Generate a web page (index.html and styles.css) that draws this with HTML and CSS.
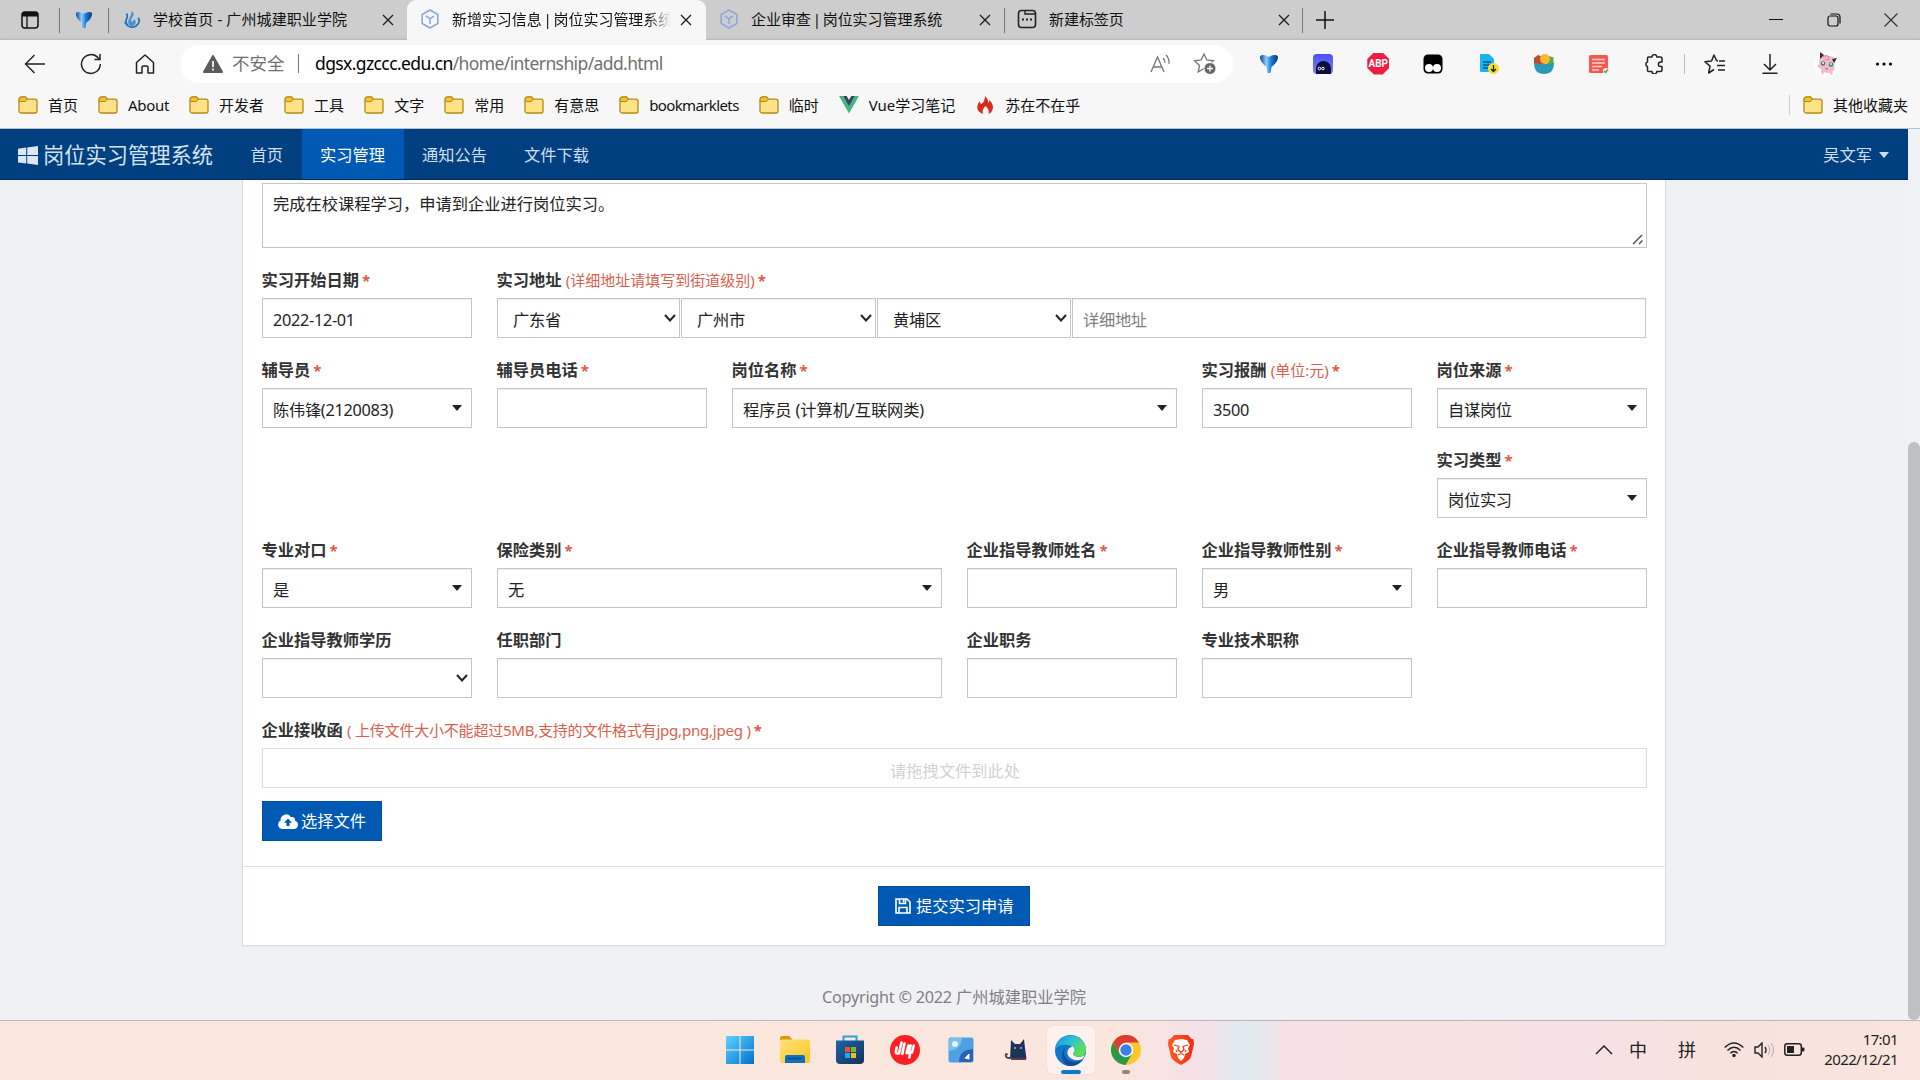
FILE: index.html
```html
<!DOCTYPE html>
<html lang="zh-CN">
<head>
<meta charset="utf-8">
<title>新增实习信息 | 岗位实习管理系统</title>
<link rel="stylesheet" href="styles.css">
</head>
<body>
<svg class="defs" width="0" height="0">
  <defs>
    <linearGradient id="gBlue" x1="0" x2="1"><stop offset="0" stop-color="#0d3c8c"/><stop offset=".35" stop-color="#8fd0ff"/><stop offset=".6" stop-color="#1b7fe0"/><stop offset="1" stop-color="#06386f"/></linearGradient>
    <linearGradient id="gWin" x1="0" y1="0" x2="1" y2="1"><stop offset="0" stop-color="#5fd3ff"/><stop offset="1" stop-color="#0070d0"/></linearGradient>
    <linearGradient id="gFold" x1="0" y1="0" x2="1" y2="1"><stop offset="0" stop-color="#ffe27a"/><stop offset="1" stop-color="#ffc41f"/></linearGradient>
    <linearGradient id="gStore" x1="0" y1="0" x2="1" y2="1"><stop offset="0" stop-color="#1a66a8"/><stop offset="1" stop-color="#14305c"/></linearGradient>
    <linearGradient id="gEdge" x1="0" y1="0" x2="1" y2=".5"><stop offset="0" stop-color="#1d8fe0"/><stop offset=".5" stop-color="#2cc0d8"/><stop offset="1" stop-color="#5fe04c"/></linearGradient>
    <linearGradient id="gBrave" x1="0" x2="1"><stop offset="0" stop-color="#ff5a1f"/><stop offset="1" stop-color="#f52a10"/></linearGradient>
    <linearGradient id="gPurp" x1="0" y1="0" x2="0" y2="1"><stop offset="0" stop-color="#4a4ff5"/><stop offset="1" stop-color="#7c84f0"/></linearGradient>
    <symbol id="folder" viewBox="0 0 20 18"><path d="M1 4a3 3 0 0 1 3-3h3.500l2 2.200H17a2 2 0 0 1 2 2V15a2 2 0 0 1-2 2H3a2 2 0 0 1-2-2z" fill="#ffe187" stroke="#b58a14" stroke-width="1.300"/><path d="M1.200 5.500V3.600A2.600 2.600 0 0 1 3.800 1H7.300l2 2.200-1.800 2.300z" fill="#f2c230" stroke="#b58a14"/></symbol>
    <symbol id="close" viewBox="0 0 12 12"><path d="M1 1l10 10M11 1L1 11" stroke="#222" stroke-width="1.400"/></symbol>
    <symbol id="vee" viewBox="0 0 18 20"><path d="M0 3.500Q0 .8 3 1q3.500 0 6 2 2.500-2 6-2 3-.2 3 2.500-.5 5-6.500 9.500L10.500 19h-3L6.500 13Q.5 8.500 0 3.500z" fill="url(#gBlue)"/></symbol>
    <symbol id="cube" viewBox="0 0 20 20"><path d="M10 1l7.800 4.500v9L10 19l-7.800-4.500v-9z" fill="none" stroke="#8ba8dc" stroke-width="1.600"/><path d="M6 7l4 2.800L14 7M10 9.800V15" fill="none" stroke="#8ba8dc" stroke-width="1.600"/></symbol>
  </defs>
</svg>

<div class="tabstrip">
  <div class="tab-tool"><svg width="18" height="18" viewBox="0 0 18 18"><rect x="1" y="1" width="16" height="16" rx="3" fill="none" stroke="#111" stroke-width="1.500"/><path d="M1 5.500V3.500A2.500 2.500 0 0 1 3.500 1h11A2.500 2.500 0 0 1 17 3.500V5.500z" fill="#111"/><path d="M6 5v12" stroke="#111" stroke-width="1.300"/></svg></div>
  <div class="tab-pin"><svg width="18" height="18"><use href="#vee"/></svg></div>
  <div class="tab">
    <svg class="favicon" width="20" height="20" viewBox="0 0 20 20"><path d="M10 2q3 3 .5 6-2.500 3-.5 5 2-1 1.500-3 3 1.500 2 4.500-1.500 3-4.500 2.500Q5 15.500 6.500 11 9 7 10 2z" fill="#4a90cf"/><path d="M4.500 4.500Q6 7 4.500 10 3 14 6 16.500M16 9q2.500 2.500 0 6-3 4-7.500 3-4-1-5.500-5" fill="none" stroke="#2474bd" stroke-width="1.800"/></svg>
    <span class="tab-title first">学校首页 - 广州城建职业学院</span><svg class="x" width="12" height="12"><use href="#close"/></svg>
  </div>
  <div class="tab active">
    <svg class="favicon" width="20" height="20"><use href="#cube"/></svg>
    <span class="tab-title piped fade">新增实习信息 | 岗位实习管理系统</span><svg class="x" width="12" height="12"><use href="#close"/></svg>
  </div>
  <div class="tab">
    <svg class="favicon" width="20" height="20"><use href="#cube"/></svg>
    <span class="tab-title piped">企业审查 | 岗位实习管理系统</span><svg class="x" width="12" height="12"><use href="#close"/></svg>
  </div>
  <div class="tab divided">
    <svg class="favicon" width="20" height="20" viewBox="0 0 20 20"><rect x="1.500" y="1.500" width="17" height="17" rx="3" fill="none" stroke="#222" stroke-width="1.600"/><path d="M8 2v3h10" fill="none" stroke="#222" stroke-width="1.400"/><path d="M5 10.500h2M9 10.500h2M13 10.500h2" stroke="#222" stroke-width="2"/></svg>
    <span class="tab-title">新建标签页</span><svg class="x" width="12" height="12"><use href="#close"/></svg>
  </div>
  <div class="new-tab"><svg width="18" height="18" viewBox="0 0 18 18"><path d="M9 0v18M0 9h18" stroke="#111" stroke-width="1.500"/></svg></div>
  <div class="win-btns">
    <svg width="14" height="14" viewBox="0 0 14 14"><path d="M0 6.500h14" stroke="#111"/></svg>
    <svg width="14" height="14" viewBox="0 0 14 14" fill="none" stroke="#111" stroke-width="1.200"><rect x="1" y="3" width="10" height="10" rx="2"/><path d="M3.500 1H10a3 3 0 0 1 3 3v6.500"/></svg>
    <svg width="14" height="14" viewBox="0 0 14 14"><path d="M.5 .5l13 13M13.500 .5l-13 13" stroke="#333" stroke-width="1.200"/></svg>
  </div>
</div>

<div class="toolbar">
  <div class="nav-icons">
    <svg width="22" height="20" viewBox="0 0 22 20" fill="none" stroke="#222" stroke-width="1.400"><path d="M21 10H2M10.500 1L1.500 10l9 9"/></svg>
    <svg width="22" height="22" viewBox="0 0 22 22" fill="none" stroke="#222" stroke-width="1.500"><path d="M20.300 11A9.400 9.400 0 1 1 17.800 4.600l1.700 1.700M20 1v5.500h-5.500"/></svg>
    <svg width="20" height="20" viewBox="0 0 20 20" fill="none" stroke="#222" stroke-width="1.500" stroke-linejoin="round"><path d="M1.500 8.500L10 1l8.500 7.500V19H13v-5.500q0-1.500-1.500-1.500h-3Q7 12 7 13.500V19H1.500z"/></svg>
  </div>
  <div class="address">
    <svg width="20" height="18" viewBox="0 0 20 18"><path d="M10 1L19 17H1z" fill="#5c5c5c" stroke="#5c5c5c" stroke-width="2" stroke-linejoin="round"/><path d="M10 6v6M10 13.500v2" stroke="#fff" stroke-width="1.700"/></svg>
    <span class="insecure">不安全</span><i class="bar"></i>
    <span class="url"><b>dgsx.gzccc.edu.cn</b>/home/internship/add.html</span>
    <svg class="read" width="22" height="20" viewBox="0 0 22 20" fill="none" stroke="#777" stroke-width="1.300"><path d="M1 18L7.500 3 14 18M3.500 13h8M13 4q2 2 2 5M16 1q3.500 3.500 3 9"/></svg>
    <svg class="fav" width="24" height="22" viewBox="0 0 24 22"><path d="M11 1l2.800 6 6.700.8-5 4.600 1.300 6.500L11 15.500 5.200 19l1.300-6.600-5-4.600L8.200 7z" fill="none" stroke="#777" stroke-width="1.300"/><circle cx="17" cy="15.500" r="6" fill="#666" stroke="#fff"/><path d="M17 12.500v6M14 15.500h6" stroke="#fff" stroke-width="1.300"/></svg>
  </div>
  <div class="exts">
    <svg width="18" height="20"><use href="#vee"/></svg>
    <svg width="20" height="20" viewBox="0 0 20 20"><rect width="20" height="20" rx="4" fill="url(#gPurp)"/><path d="M3 20v-5a7.500 7.500 0 0 1 15-1v6z" fill="#0b0d3c"/><circle cx="6.500" cy="14.500" r="1.300" fill="none" stroke="#fff"/><circle cx="10" cy="14.500" r="1.300" fill="none" stroke="#fff"/></svg>
    <span class="abp">ABP</span>
    <svg width="20" height="20" viewBox="0 0 20 20"><rect x=".5" y=".5" width="19" height="19" rx="4.500" fill="#000"/><circle cx="6" cy="14" r="4" fill="#fff"/><circle cx="14" cy="14" r="4" fill="#fff"/></svg>
    <svg width="20" height="20" viewBox="0 0 20 20"><path d="M1 1q0-1 1-1h8l5 5v13H2q-1 0-1-1z" fill="#18b4ea"/><path d="M4 8h8M4 11h8M4 14h5" stroke="#075a8c" stroke-width="1.300"/><circle cx="14.500" cy="14.500" r="5.500" fill="#f8e02c"/><path d="M14.500 11v6.500M12 15l2.500 2.500L17 15" fill="none" stroke="#222" stroke-width="1.400"/></svg>
    <svg width="20" height="20" viewBox="0 0 20 20"><path d="M0 10V4l4-3 5 2 3 7z" fill="#c8443d"/><path d="M19.500 10V3.500L15 2l-2 8z" fill="#59a84b"/><circle cx="11" cy="5" r="5" fill="#f7b82c"/><path d="M0 8.500q3 1.500 10 1.500t10-1.500Q20 20 10 20T0 8.500z" fill="#2c9ab7"/></svg>
    <svg width="20" height="20" viewBox="0 0 20 20"><rect x="0" y="1" width="19" height="18" rx="1.500" fill="#fb5550"/><path d="M3 5.500h13M3 9h13M3 12.500h10M3 16h7" stroke="#fff" stroke-opacity=".75" stroke-width="1.300"/><circle cx="17" cy="17" r="3" fill="#eef7ea"/><path d="M15 17l1.500 1.500L19 15.500" stroke="#43b14b" fill="none" stroke-width="1.500"/></svg>
    <svg width="20" height="20" viewBox="0 0 20 20" fill="none" stroke="#222" stroke-width="1.500" stroke-linejoin="round"><path d="M4.500 3H8a2.400 2.400 0 0 1 4.800 0h3.700q1.500 0 1.500 1.500V8h-1.300a2.300 2.300 0 0 0 0 4.600H18v3.400q0 1.500-1.500 1.500h-3.700a2.400 2.400 0 0 1-4.800 0H4.500q-1 0-1-1v-3.900a2.400 2.400 0 0 1 0-4.600V4q0-1 1-1z"/></svg>
    <i class="tsep"></i>
    <svg width="22" height="20" viewBox="0 0 22 20" fill="none" stroke="#222" stroke-width="1.500" stroke-linejoin="round"><path d="M14 7l-1.500-.5L10 1 7.500 7 1 7.800l5 4.300L4.700 19 10 15.500M15 7h6M13 11.500h8M14 16h7"/></svg>
    <svg width="18" height="20" viewBox="0 0 18 20" fill="none" stroke="#222" stroke-width="1.500"><path d="M9 0v16M3 10l6 6 6-6M1.500 19.200h15"/></svg>
    <svg width="26" height="26" viewBox="0 0 26 26"><circle cx="13" cy="13" r="13" fill="#fff"/><path d="M5.500 9L6.500 2l5 3h5l5 2-1 7q1 8-7 8Q4 21 5.500 9z" fill="#f4bccb"/><path d="M4 14l3 3M8 20l1 3M17 21l1 2.500" stroke="#f4bccb" stroke-width="2.500"/><path d="M6 1l4 3-4 4zM23 7l-3 5-2-4z" fill="#3c2934"/><circle cx="9" cy="12.500" r="2.300" fill="#2d8b84"/><circle cx="17" cy="13.500" r="2.300" fill="#2d8b84"/><circle cx="9" cy="12" r="1" fill="#fff"/><circle cx="17" cy="13" r="1" fill="#fff"/><path d="M9 6q5-3 6 1-1 3-4 1" fill="none" stroke="#df8fa7" stroke-width="1.200"/><path d="M11.500 17.500q1.500 1.500 2.500 0" stroke="#a14d5e" fill="none"/></svg>
    <svg width="18" height="4" viewBox="0 0 18 4"><circle cx="2.500" cy="2" r="1.600"/><circle cx="9" cy="2" r="1.600"/><circle cx="15.500" cy="2" r="1.600"/></svg>
  </div>
</div>

<div class="bookmarks">
  <span class="bm"><svg width="20" height="18"><use href="#folder"/></svg>首页</span>
  <span class="bm about"><svg width="20" height="18"><use href="#folder"/></svg>About</span>
  <span class="bm"><svg width="20" height="18"><use href="#folder"/></svg>开发者</span>
  <span class="bm"><svg width="20" height="18"><use href="#folder"/></svg>工具</span>
  <span class="bm"><svg width="20" height="18"><use href="#folder"/></svg>文字</span>
  <span class="bm"><svg width="20" height="18"><use href="#folder"/></svg>常用</span>
  <span class="bm"><svg width="20" height="18"><use href="#folder"/></svg>有意思</span>
  <span class="bm marklets"><svg width="20" height="18"><use href="#folder"/></svg>bookmarklets</span>
  <span class="bm"><svg width="20" height="18"><use href="#folder"/></svg>临时</span>
  <span class="bm"><svg width="20" height="18" viewBox="0 0 20 18"><path d="M0 0h4l6 10.500L16 0h4L10 17.500z" fill="#41b883"/><path d="M4 0h3.700L10 4l2.300-4H16l-6 10.500z" fill="#35495e"/></svg>Vue学习笔记</span>
  <span class="bm"><svg width="20" height="18" viewBox="0 0 20 18"><path d="M10 0q4 4 3 7 1 0 1.500-3Q20 10 17 15q-1 2-3.500 3 1.500-4-3-8-4 4-2.500 8Q0 15 3 8l2-3q0 3 1.500 3Q10 5 10 0z" fill="#dc2a18"/></svg>苏在不在乎</span>
  <span class="bm other"><svg width="20" height="18"><use href="#folder"/></svg>其他收藏夹</span>
</div>

<div class="viewport">
  <div class="page">
    <nav class="navbar">
      <div class="brand"><svg width="20" height="19" viewBox="0 0 20 19"><path d="M0 2.700l8.200-1.200v7.600H0zM9.200 1.400L20 0v9.100H9.200zM0 10h8.200v7.600L0 16.400zM9.200 10H20v9L9.200 17.600z" fill="#dce7f2"/></svg>岗位实习管理系统</div>
      <a class="link">首页</a><a class="link on">实习管理</a><a class="link">通知公告</a><a class="link">文件下载</a>
      <div class="user">吴文军<i class="caret"></i></div>
    </nav>
    <main class="card">
      <div class="card-body">
        <div class="textarea">完成在校课程学习，申请到企业进行岗位实习。<svg class="grip" width="12" height="11" viewBox="0 0 12 11"><path d="M1 10L10 1M7 10l3.500-3.500" stroke="#444" stroke-width="1.300"/></svg></div>
        <div class="form">
          <div class="field"><label>实习开始日期<em>*</em></label><div class="ctl">2022-12-01</div></div>
          <div class="field s5"><label>实习地址 <small>(详细地址请填写到街道级别)</small><em>*</em></label>
            <div class="addr"><div class="ctl native">广东省<svg class="chev" width="12" height="8" viewBox="0 0 12 8"><path d="M1 1l5 5.500L11 1"/></svg></div><div class="ctl native">广州市<svg class="chev" width="12" height="8" viewBox="0 0 12 8"><path d="M1 1l5 5.500L11 1"/></svg></div><div class="ctl native">黄埔区<svg class="chev" width="12" height="8" viewBox="0 0 12 8"><path d="M1 1l5 5.500L11 1"/></svg></div><div class="ctl ph">详细地址</div></div></div>

          <div class="field"><label>辅导员<em>*</em></label><div class="ctl">陈伟锋(2120083)<i class="caret"></i></div></div>
          <div class="field"><label>辅导员电话<em>*</em></label><div class="ctl"></div></div>
          <div class="field s2"><label>岗位名称<em>*</em></label><div class="ctl job">程序员 (计算机/互联网类)<i class="caret"></i></div></div>
          <div class="field"><label>实习报酬 <small>(单位:元)</small><em>*</em></label><div class="ctl">3500</div></div>
          <div class="field"><label>岗位来源<em>*</em></label><div class="ctl">自谋岗位<i class="caret"></i></div></div>

          <div class="field last"><label>实习类型<em>*</em></label><div class="ctl">岗位实习<i class="caret"></i></div></div>

          <div class="field"><label>专业对口<em>*</em></label><div class="ctl">是<i class="caret"></i></div></div>
          <div class="field s2"><label>保险类别<em>*</em></label><div class="ctl">无<i class="caret"></i></div></div>
          <div class="field"><label>企业指导教师姓名<em>*</em></label><div class="ctl"></div></div>
          <div class="field"><label>企业指导教师性别<em>*</em></label><div class="ctl">男<i class="caret"></i></div></div>
          <div class="field"><label>企业指导教师电话<em>*</em></label><div class="ctl"></div></div>

          <div class="field"><label>企业指导教师学历</label><div class="ctl native"><svg class="chev" width="12" height="8" viewBox="0 0 12 8"><path d="M1 1l5 5.500L11 1"/></svg></div></div>
          <div class="field s2"><label>任职部门</label><div class="ctl"></div></div>
          <div class="field"><label>企业职务</label><div class="ctl"></div></div>
          <div class="field"><label>专业技术职称</label><div class="ctl"></div></div>

          <div class="field s6"><label>企业接收函 <small class="upload-hint">( 上传文件大小不能超过5MB,支持的文件格式有jpg,png,jpeg )</small><em>*</em></label><div class="ctl drop">请拖拽文件到此处</div></div>
        </div>
        <button class="btn pick"><svg width="20" height="15" viewBox="0 0 20 15"><path d="M4.500 15A4.500 4.500 0 0 1 2.600 6.500 5.600 5.600 0 0 1 13 3.200a3 3 0 0 1 4 3.600A4.200 4.200 0 0 1 16 15z" fill="#fff"/><path d="M10 4.500l4 4.200h-2.500V12h-3V8.700H6z" fill="#0059b3"/></svg>选择文件</button>
      </div>
      <div class="card-foot"><button class="btn submit"><svg width="16" height="16" viewBox="0 0 16 16" fill="none" stroke="#fff" stroke-width="1.600"><path d="M1 1h11l3 3v11H1zM4 15V9.500h8V15M4.500 1v4.500h6V1"/><path d="M8.500 1.500v3"/></svg>提交实习申请</button></div>
    </main>
    <footer class="copy"><span>Copyright © 2022</span> 广州城建职业学院</footer>
  </div>
  <div class="scroll"><div class="thumb"></div></div>
</div>

<div class="taskbar">
  <div class="apps">
    <div class="app"><svg width="30" height="30" viewBox="0 0 30 30"><path d="M1 1h13.500v13.500H1zM15.500 1H29v13.500H15.500zM1 15.500h13.500V29H1zM15.500 15.500H29V29H15.500z" fill="url(#gWin)"/></svg></div>
    <div class="app"><svg width="30" height="28" viewBox="0 0 30 28"><path d="M0 2q0-2 2-2h7l4 4v5H0z" fill="#d79b08"/><path d="M0 5q0-1.500 2-1.500h26q2 0 2 2V25q0 2-2 2H2q-2 0-2-2z" fill="url(#gFold)"/><path d="M5 27v-6q0-2 2-2h16q2 0 2 2v6z" fill="#0d6fc0"/><path d="M8 22.500h14" stroke="#0a4c8c" stroke-width="1.500"/></svg></div>
    <div class="app"><svg width="30" height="30" viewBox="0 0 30 30"><path d="M8.500 7V1.500h13V7" fill="none" stroke="#25a5e8" stroke-width="2"/><path d="M1 5.500h28V25q0 4-4 4H5q-4 0-4-4z" fill="url(#gStore)"/><path d="M10 12h5v5h-5z" fill="#f1502f"/><path d="M16 12h5v5h-5z" fill="#7fba1e"/><path d="M10 18h5v5h-5z" fill="#20a8ef"/><path d="M16 18h5v5h-5z" fill="#fdb913"/></svg></div>
    <div class="app"><svg width="30" height="30" viewBox="0 0 30 30"><circle cx="15" cy="15" r="15" fill="#fb1f24"/><g fill="none" stroke="#fff" stroke-width="2.600" stroke-linecap="round" stroke-linejoin="round"><path d="M11.500 7.500L9 18.500H7q-1.500 0-1-2.500l.7-3.500M14.500 8.500L12.300 19M18.500 10.500L16.500 18h2.200l2-7.500M23.800 10.500L22 17.500h-1.500M20.300 18l-1 4.500"/></g></svg></div>
    <div class="app"><svg width="26" height="26" viewBox="0 0 26 26"><rect x=".5" y=".5" width="25" height="25" rx="2.500" fill="#4ea0e2"/><path d="M1 14q12-1 13-13H3Q1 1 1 3z" fill="#79c0f0"/><circle cx="7" cy="7" r="3" fill="#e6f6ff"/><path d="M11 25q0-12 14-13v11q0 2-2 2z" fill="#2764b8"/><path d="M17 21l4-4v5z" fill="#fff" stroke="#fff"/></svg></div>
    <div class="app"><svg width="24" height="24" viewBox="0 0 24 24"><path d="M7 2l4 4h5l4-5 1 9 1.500 11H6z" fill="#1f3358"/><path d="M8 20H4q-3-1-2-4l2 .5M7 21h15" fill="none" stroke="#54405a" stroke-width="1.800"/><circle cx="11" cy="10" r="1" fill="#9cb6e4"/><circle cx="17" cy="10" r="1" fill="#9cb6e4"/></svg></div>
    <div class="app current"><svg width="31" height="31" viewBox="0 0 30 30"><circle cx="15" cy="15" r="15" fill="#1276cc"/><path d="M.3 13A15 15 0 0 1 30 14q0 6-6 7-7 .5-6-3 2-8-7-8.500Q4 9 .3 13z" fill="url(#gEdge)"/><path d="M10 12q-4 9 4 13 7 3 13-1.500A15 15 0 0 1 12 29.700Q6 26 7 18q.5-4 3-6z" fill="#124c91"/><path d="M17 11q3 3 .8 6.500-1 2.500 3 3.500 5 1 8-2-1 4-4 5-8 1.500-12-4-3-6 4.200-9z" fill="#fdf1ee"/></svg></div>
    <div class="app open"><svg width="30" height="30" viewBox="0 0 30 30"><circle cx="15" cy="15" r="15" fill="#fcc72c"/><path d="M2 7.500A15 15 0 0 1 28 7.500H15l-6.500 11z" fill="#dc3d31"/><path d="M2 7.500A15 15 0 0 0 14.500 30l6.500-11-12.500-.5z" fill="#289949"/><circle cx="15" cy="15" r="7.200" fill="#fff"/><circle cx="15" cy="15" r="5.700" fill="#3b7de9"/></svg></div>
    <div class="app"><svg width="26" height="30" viewBox="0 0 26 30"><path d="M6 0h14l3 3.500 2.500 1L26 9l-3 13q-2 4-10 8Q5 26 3 22L0 9l.5-4.500L3 3.500z" fill="url(#gBrave)"/><path d="M7 5l6-1 6 1 3 5-2 3 1 4-4 2-1 4-3 3-3-3-1-4-4-2 1-4-2-3z" fill="#fff"/><path d="M6 10l5 1.500-1 3 3 3 3-3-1-3 5-1.500M10 20l3-1.500 3 1.500M8 15l1 2M18 15l-1 2" fill="none" stroke="#f4431c" stroke-width="1.300"/></svg></div>
  </div>
  <div class="tray">
    <svg class="up" width="18" height="10" viewBox="0 0 18 10"><path d="M1 9l8-8 8 8" fill="none" stroke="#222" stroke-width="1.500"/></svg>
    <span class="ime">中</span><span class="ime pin">拼</span>
    <svg class="wifi" width="20" height="16" viewBox="0 0 20 16" fill="none" stroke="#222" stroke-width="1.500"><path d="M.7 5.500Q10-3.500 19.300 5.500M3.500 8.500Q10 2 16.500 8.500M6.300 11.300Q10 7.500 13.700 11.300"/><circle cx="10" cy="13.500" r="1" fill="#222"/></svg>
    <svg class="vol" width="21" height="16" viewBox="0 0 21 16" fill="none" stroke="#222" stroke-width="1.400"><path d="M1 5h3l4-4v14l-4-4H1zM11 5q2 3 0 6"/><path d="M14 3q3.500 5 0 10M17 1q5 7 0 14" stroke="#b5a8a8" stroke-width="1"/></svg>
    <svg class="bat" width="21" height="13" viewBox="0 0 21 13"><rect x=".8" y=".8" width="16.500" height="11.400" rx="2.500" fill="none" stroke="#222" stroke-width="1.500"/><rect x="3" y="3" width="7" height="7" fill="#222"/><path d="M18 4.500h1.500q1 0 1 2t-1 2H18z" fill="#222"/></svg>
    <div class="clock"><span>17:01</span><span>2022/12/21</span></div>
  </div>
</div>
</body>
</html>
```
FILE: styles.css
```css
* { box-sizing: border-box; }
body {
  margin: 0; width: 1920px; height: 1080px; overflow: hidden;
  display: flex; flex-direction: column;
  font: 15px/20px "Noto Sans", "Noto Sans CJK SC", sans-serif; color: #111; background: #f7f7f7;
}
svg { display: block; flex: none; }
i, em { font-style: normal; }
.defs { position: absolute; }

/* tab strip */
.tabstrip { height: 40px; display: flex; background: #cdcdcd; box-shadow: inset 0 -2px 2px -1px #b4b4b4; flex: none; }
.tab-tool { width: 59px; padding: 11px 0 0 21px; }
.tab-pin { width: 50px; padding: 11px 0 0 16px; background: linear-gradient(#777, #777) 0 8px / 1px 25px no-repeat, linear-gradient(#777, #777) 49px 8px / 1px 25px no-repeat; }
.tab { width: 298px; display: flex; align-items: center; padding: 0 12px 2px 13px; }
.tab.active { width: 299px; background: #f7f7f7; border-radius: 9px 9px 0 0; }
.tab.divided { background: linear-gradient(#777, #777) 0 8px / 1px 25px no-repeat, linear-gradient(#777, #777) 298px 8px / 1px 25px no-repeat; width: 299px; }
.favicon { margin-right: 12px; }
.tab-title { flex: 1; white-space: nowrap; overflow: hidden; padding-bottom: 1px; letter-spacing: -.05px; }
.tab-title.first { letter-spacing: .1px; margin-left: -1px; }
.tab-title.piped { word-spacing: -2px; }
.tab-title.fade { flex: 0 0 219px; margin-right: 9px; -webkit-mask-image: linear-gradient(90deg, #000 195px, transparent 219px); mask-image: linear-gradient(90deg, #000 195px, transparent 219px); }
.x { margin: 2px 1px 0 0; }
.new-tab { padding: 11px 0 0 13px; }
.win-btns { margin: 13px 22px 0 auto; display: flex; gap: 43.5px; }

/* toolbar */
.toolbar { height: 48px; flex: none; display: flex; align-items: center; padding-bottom: 1px; }
.nav-icons { width: 180px; padding-left: 24px; display: flex; align-items: center; gap: 33.5px; }
.address { width: 1053px; height: 38px; border-radius: 19px; background: #fff; display: flex; align-items: center; padding-left: 23px; font-size: 17.500px; color: #707070; }
.address span { padding-bottom: 1px; }
.insecure { margin-left: 9px; width: 55px; }
.bar { width: 1px; height: 19px; background: #777; margin: 0 16px 0 11px; }
.url { flex: 1; white-space: nowrap; letter-spacing: -.61px; }
.url b { font-weight: 400; color: #000; }
.read { margin-right: 21px; }
.fav { margin-right: 16px; }
.exts { flex: 1; display: flex; align-items: center; padding-left: 27px; gap: 35.150px; }
.abp { width: 22px; margin: 0 -1px; height: 22px; background: #ee1d42; color: #fff; font: 700 10px/22px Roboto, sans-serif; text-align: center; clip-path: polygon(30% 0, 70% 0, 100% 30%, 100% 70%, 70% 100%, 30% 100%, 0 70%, 0 30%); }
.tsep { width: 1px; height: 20px; background: #bbb; margin: 0 -16.500px 0 -15px; }

/* bookmarks */
.bookmarks { height: 41px; flex: none; display: flex; align-items: center; gap: 20px; padding: 0 12px 6px 18px; border-bottom: 1px solid #b4c0cc; }
.bm { display: flex; align-items: center; gap: 10px; white-space: nowrap; }
.bm.about { letter-spacing: -.3px; }
.bm.marklets { letter-spacing: -.62px; }
.bm.other { margin-left: auto; padding-left: 13px; border-left: 1px solid #ccc; }

/* page */
.viewport { flex: 1; display: flex; min-height: 0; }
.page { width: 1908px; background: #f0f1f5; font-size: 16.250px; line-height: 22px; }
.navbar { height: 51px; background: #004080; border-bottom: 1px solid #002b57; display: flex; align-items: center; color: #cfdeee; padding: 0 18px; }
.brand { width: 214px; display: flex; align-items: center; gap: 5px; font-size: 21.250px; color: #d5e2ef; padding-top: 2px; }
.link { height: 50px; line-height: 52px; padding: 0 18.500px; }
.link.on { background: #0059b3; color: #fff; }
.user { margin-left: auto; display: flex; align-items: center; gap: 7px; padding: 1px 1px 0 0; }
.caret { width: 0; height: 0; border: 5px solid transparent; border-top: 6px solid currentColor; border-bottom: 0; }

.card { width: 1424px; height: 766px; margin-left: 242px; background: #fff; border: 1px solid #d9dde2; border-top: 0; box-shadow: 0 1px 2px #0000000c; }
.card-body { height: 687px; padding: 3px 18px 0 19px; border-bottom: 1px solid #e0e2e5; }
.textarea { position: relative; width: 1385px; height: 65px; border: 1px solid #c5c6ca; padding: 9px 10px; color: #222; }
.grip { position: absolute; right: 2px; bottom: 2px; }
.form { display: grid; grid-template-columns: repeat(6, 210px); grid-auto-rows: 90px; column-gap: 25px; }
.field { padding-top: 20px; min-width: 0; }
.s2 { grid-column: span 2; }
.s5 { grid-column: span 5; }
.s6 { grid-column: span 6; }
.last { grid-column: 6; }
label { display: block; height: 25px; line-height: 25px; margin: 0 0 5px -.5px; font-weight: 700; color: #333; white-space: nowrap; }
label small { font-size: 15px; font-weight: 400; color: #d9614c; }
label em { color: #e05a4a; margin-left: 3px; font-weight: 700; font-size: 15px; }
.upload-hint { letter-spacing: -.2px; }
.ctl { height: 40px; border: 1px solid #c5c6ca; box-shadow: inset 0 1px 1px #00000012; background: #fff; display: flex; align-items: center; padding: 3px 9px 0 10px; color: #222; letter-spacing: -.3px; white-space: nowrap; }
.ctl.job { letter-spacing: -.1px; }
.ctl .caret { margin: -3px 0 0 auto; }
.chev { margin: -3px -6px 0 auto; fill: none; stroke: #222; stroke-width: 2; }
.addr { display: grid; grid-template-columns: 183px 195px 194px 1fr; column-gap: 1px; width: 1149px; }
.addr .native { padding-left: 15px; }
.ph { color: #808080; }
.drop { justify-content: center; border-color: #dcdde0; box-shadow: none; color: #d2d2d4; padding-top: 6px; letter-spacing: 0; }
.btn { border: 1px solid #004f9f; background: #0059b3; color: #fff; height: 40px; font: 16.250px/38px "Noto Sans", "Noto Sans CJK SC", sans-serif; display: flex; align-items: center; padding: 0 15px; gap: 3px; }
.pick { margin-top: 13px; width: 120px; }
.card-foot { display: flex; justify-content: center; padding-top: 19px; }
.submit { width: 152px; padding: 0 16px; gap: 5px; white-space: nowrap; }
.copy { margin-top: 40px; text-align: center; color: #808080; }
.copy span { letter-spacing: -.25px; }
.scroll { width: 12px; background: #f1f2f5; padding-top: 313px; }
.thumb { height: 578px; background: #bfc0c2; border-radius: 6px; }

/* taskbar */
.taskbar { height: 60px; flex: none; display: flex; align-items: center; border-top: 1px solid #c0b2b5; background: linear-gradient(90deg, #fae8df 0, #fae6dc 58%, #f6e2e6 62%, #f3e2e9 63.200%, #e0eaf1 64.500%, #e4e8ee 65.700%, #f5e0e3 67%, #f6e2e2 75%, #f7e0e4 82%, #f8e2dd 90%, #f9e5dd 100%); }
.apps { margin: -1px 0 0 716px; display: flex; gap: 7.140px; }
.app { width: 48px; height: 48px; display: flex; align-items: center; justify-content: center; position: relative; border-radius: 5px; }
.current { background: #fdf1ee; box-shadow: 0 0 1px #cbb; }
.current::after, .open::after { content: ""; position: absolute; bottom: 0; left: 14px; width: 20px; height: 4px; border-radius: 2px; background: #0c78d0; }
.open::after { left: 20px; width: 8px; background: #8f8581; }
.tray { margin: -2px 0 0 auto; padding-right: 22px; display: flex; align-items: center; color: #222; }
.ime { font-size: 18px; width: 18px; margin-left: 16px; }
.pin { margin-left: 31px; }
.wifi { margin-left: 28px; }
.vol { margin-left: 10px; }
.bat { margin-left: 9px; }
.clock { margin: -2px 0 0 20px; width: 73px; display: flex; flex-direction: column; align-items: flex-end; letter-spacing: -.6px; white-space: nowrap; }
```
